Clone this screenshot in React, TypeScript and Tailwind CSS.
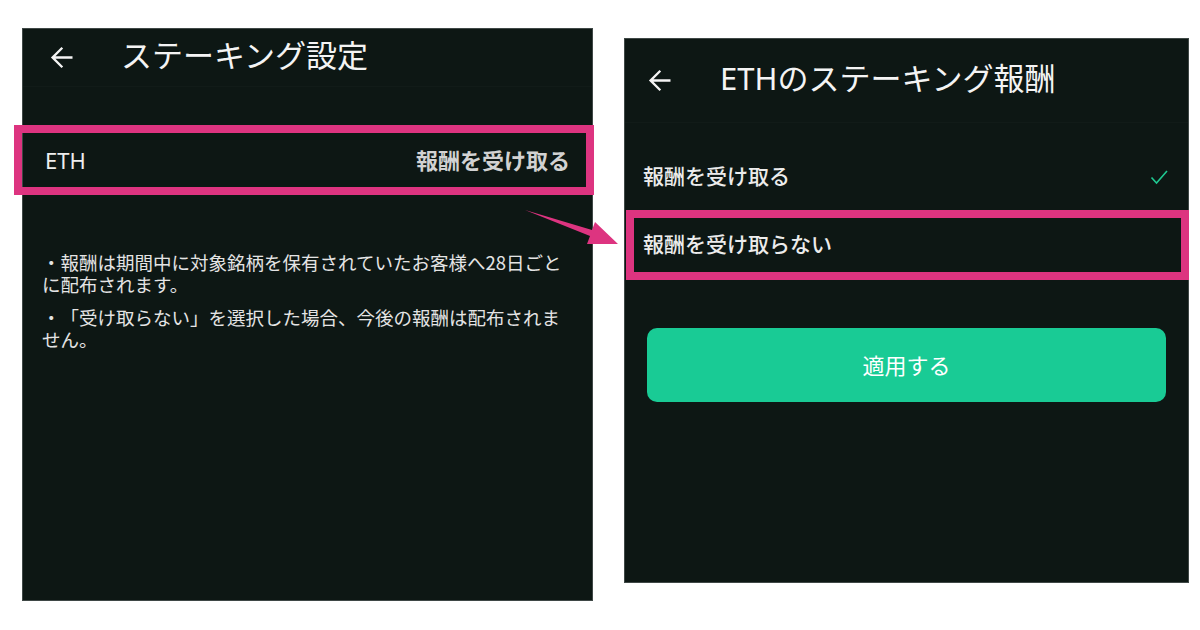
import React from "react";

const FONT = { fontFamily: '"Noto Sans", "Noto Sans CJK JP", sans-serif' };
const JP = { fontFamily: '"Noto Sans CJK JP", sans-serif' };

function BackArrow() {
  return (
    <svg width="33" height="33" viewBox="0 0 24 24" fill="#f4f4f4">
      <path d="M20 11.1H7.6l5.6-5.6L12 4.3 4.3 12l7.7 7.7 1.2-1.2-5.6-5.6H20z" />
    </svg>
  );
}

function Check() {
  return (
    <svg width="18" height="18" viewBox="0 0 18 18" fill="none">
      <path d="M1.5 9.5l5 5.5L17 3" stroke="#1fc891" strokeWidth="1.6" />
    </svg>
  );
}

function StakingSettings() {
  return (
    <div className="w-[571px] h-[573px] shrink-0 bg-[#0d1714] border border-[#3f4846] flex flex-col">
      <div className="h-[58px] flex items-center pl-[22px] gap-[43px] border-b border-[#111b18]">
        <BackArrow />
        <span className="text-[31px] text-[#f4f4f4] leading-none -mt-[4px]">ステーキング設定</span>
      </div>
      <div className="mt-[38px] -ml-[9px] w-[580px] h-[70px] border-[8px] border-[#dd3480] flex items-center justify-between pl-[23px] pr-[16px]">
        <span className="text-[22px] text-[#eeeeee]">ETH</span>
        <span className="text-[22px] font-semibold text-[#d2d2d2]">報酬を受け取る</span>
      </div>
      <div
        className="mt-[56px] pl-[19px] w-[552px] text-[18.5px] leading-[22px] text-[#e4e4e4] flex flex-col gap-[11px] [text-spacing-trim:space-all]"
        style={JP}
      >
        <p>・報酬は期間中に対象銘柄を保有されていたお客様へ28日ごとに配布されます。</p>
        <p>・「受け取らない」を選択した場合、今後の報酬は配布されません。</p>
      </div>
    </div>
  );
}

function RewardSelect() {
  return (
    <div className="w-[565px] h-[545px] shrink-0 mt-[10px] bg-[#0d1714] border border-[#3f4846] flex flex-col">
      <div className="h-[84px] flex items-center pl-[18px] gap-[44px] border-b border-[#111b18]">
        <BackArrow />
        <span className="text-[31px] text-[#f4f4f4] leading-none -mt-[4px]">ETHのステーキング報酬</span>
      </div>
      <div className="mt-[20px] h-[67px] flex items-center justify-between pl-[18px] pr-[20px]">
        <span className="text-[21px] font-medium text-[#ececec]">報酬を受け取る</span>
        <Check />
      </div>
      <div className="ml-[1px] w-[563px] h-[70px] border-[8px] border-[#dd3480] flex items-center pl-[9px]">
        <span className="text-[21px] font-medium text-[#ececec]">報酬を受け取らない</span>
      </div>
      <div className="mt-[48px] ml-[22px] w-[519px] h-[74px] rounded-[10px] bg-[#19cb95] flex items-center justify-center">
        <span className="text-[22px] text-white">適用する</span>
      </div>
    </div>
  );
}

export default function App() {
  return (
    <div className="relative w-[1200px] h-[630px] bg-white overflow-hidden" style={FONT}>
      <div className="flex items-start pl-[22px] pt-[28px] gap-[31px]">
        <StakingSettings />
        <RewardSelect />
      </div>
      <svg className="absolute left-0 top-0 pointer-events-none" width="1200" height="630">
        <polygon points="525,210 592,230 595,222 618,244 587,244 590,236" fill="#dd3480" />
      </svg>
    </div>
  );
}
